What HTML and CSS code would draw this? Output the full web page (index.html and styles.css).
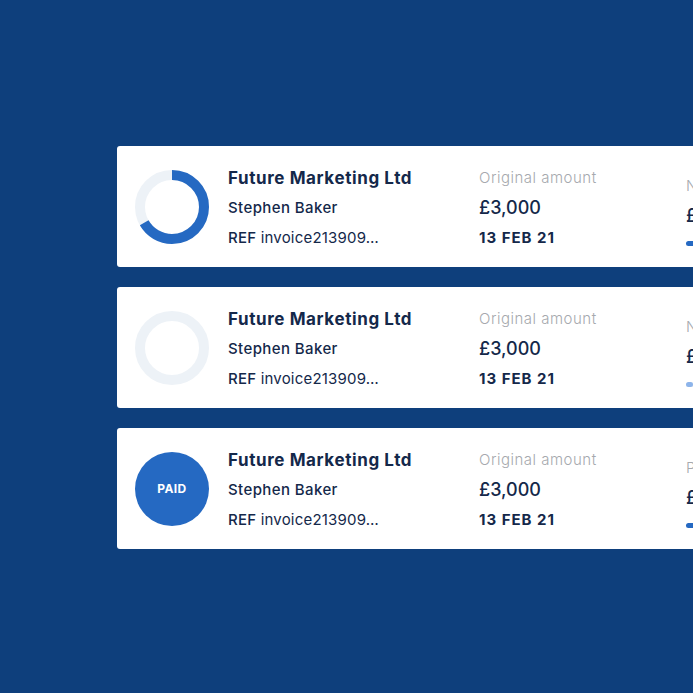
FILE: index.html
```html
<!DOCTYPE html>
<html>
<head>
<meta charset="utf-8">
<link rel="stylesheet" href="styles.css">
</head>
<body>
<div class="stage">
  <div class="list">
    <div class="card">
      <div class="status">
        <svg width="74" height="74" viewBox="0 0 74 74">
          <circle cx="37" cy="37" r="32" fill="none" stroke="#edf2f7" stroke-width="10"/>
          <circle cx="37" cy="37" r="32" fill="none" stroke="#2569c2" stroke-width="10" stroke-dasharray="134 201" transform="rotate(-90 37 37)"/>
        </svg>
      </div>
      <div class="col main">
        <div class="title">Future Marketing Ltd</div>
        <div class="name">Stephen Baker</div>
        <div class="ref"><span class="ref-label">REF</span> invoice213909…</div>
      </div>
      <div class="col amount">
        <div class="label">Original amount</div>
        <div class="value">£3,000</div>
        <div class="date">13 FEB 21</div>
      </div>
      <div class="col amount">
        <div class="label">Net amount</div>
        <div class="value">£2,000</div>
        <div class="bar"><span class="fill" style="width:66%"></span></div>
      </div>
    </div>

    <div class="card">
      <div class="status">
        <svg width="74" height="74" viewBox="0 0 74 74">
          <circle cx="37" cy="37" r="32" fill="none" stroke="#edf2f7" stroke-width="10"/>
        </svg>
      </div>
      <div class="col main">
        <div class="title">Future Marketing Ltd</div>
        <div class="name">Stephen Baker</div>
        <div class="ref"><span class="ref-label">REF</span> invoice213909…</div>
      </div>
      <div class="col amount">
        <div class="label">Original amount</div>
        <div class="value">£3,000</div>
        <div class="date">13 FEB 21</div>
      </div>
      <div class="col amount">
        <div class="label">Net amount</div>
        <div class="value">£3,000</div>
        <div class="bar"><span class="fill light" style="width:4%"></span></div>
      </div>
    </div>

    <div class="card">
      <div class="status">
        <div class="paid">PAID</div>
      </div>
      <div class="col main">
        <div class="title">Future Marketing Ltd</div>
        <div class="name">Stephen Baker</div>
        <div class="ref"><span class="ref-label">REF</span> invoice213909…</div>
      </div>
      <div class="col amount">
        <div class="label">Original amount</div>
        <div class="value">£3,000</div>
        <div class="date">13 FEB 21</div>
      </div>
      <div class="col amount">
        <div class="label">Paid amount</div>
        <div class="value">£3,000</div>
        <div class="bar"><span class="fill" style="width:100%"></span></div>
      </div>
    </div>
  </div>
</div>
</body>
</html>
```

FILE: styles.css
```css
html, body {
  margin: 0;
  padding: 0;
}
body {
  background: #0e3f7c;
  width: 693px;
  height: 693px;
  overflow: hidden;
  font-family: Inter, "Noto Sans", sans-serif;
  color: #14284a;
}
.stage {
  padding: 146px 0 0 117px;
}
.list {
  display: flex;
  flex-direction: column;
  gap: 20px;
  width: 900px;
}
.card {
  background: #ffffff;
  border-radius: 3px;
  height: 121px;
  box-sizing: border-box;
  display: flex;
  align-items: center;
  padding-left: 18px;
}
.status {
  width: 74px;
  height: 74px;
  margin-right: 19px;
  flex: none;
}
.status svg {
  display: block;
}
.paid {
  width: 74px;
  height: 74px;
  border-radius: 50%;
  background: #2569c2;
  color: #ffffff;
  font-weight: 700;
  font-size: 12px;
  letter-spacing: 0.4px;
  display: flex;
  align-items: center;
  justify-content: center;
}
.col {
  display: flex;
  flex-direction: column;
  flex: none;
  margin-top: 3px;
}
.main {
  width: 251px;
}
.amount {
  width: 207px;
}
.col > div {
  height: 30px;
  line-height: 30px;
  white-space: nowrap;
}
.title {
  font-size: 17px;
  font-weight: 700;
  letter-spacing: 0.6px;
}
.name {
  font-size: 15px;
  font-weight: 500;
  letter-spacing: 0.4px;
}
.ref {
  font-size: 15px;
  letter-spacing: 0.2px;
}
.ref-label {
  font-weight: 500;
}
.label {
  font-size: 15px;
  font-weight: 300;
  letter-spacing: 0.5px;
  color: #a6a9ae;
}
.value {
  font-size: 18px;
  font-weight: 500;
}
.date {
  font-size: 15px;
  font-weight: 700;
  letter-spacing: 1px;
}
.col > .bar {
  height: 5px;
  margin-top: 10px;
  border-radius: 3px;
  background: #eef2f7;
  width: 180px;
  display: flex;
}
.fill {
  display: block;
  height: 5px;
  border-radius: 3px;
  background: #2569c2;
}
.fill.light {
  background: #8db4ea;
}
```
